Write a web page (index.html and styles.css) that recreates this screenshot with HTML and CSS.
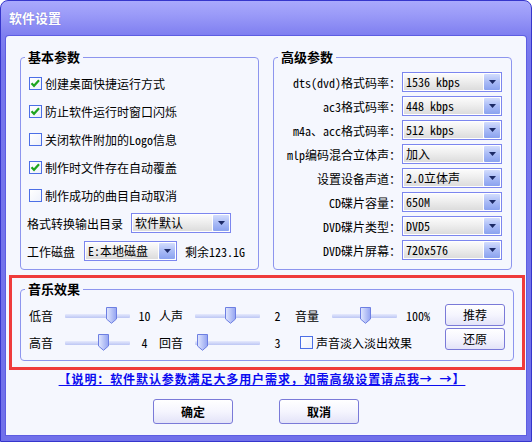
FILE: index.html
```html
<!DOCTYPE html>
<html lang="zh-CN">
<head>
<meta charset="utf-8">
<title>软件设置</title>
<link rel="stylesheet" href="styles.css">
</head>
<body>
<div class="window">
  <div class="titlebar"><span class="title">软件设置</span></div>
  <div class="client">
    <div class="top-row">
      <fieldset class="group basic">
        <legend>基本参数</legend>
        <div class="rows">
          <div class="row check"><span class="cb"><svg width="11" height="11" viewBox="0 0 11 11"><path d="M1.5 5.2 L4 7.8 L9 2.2" fill="none" stroke="#1fa51f" stroke-width="2.2"/></svg></span><span>创建桌面快捷运行方式</span></div>
          <div class="row check"><span class="cb"><svg width="11" height="11" viewBox="0 0 11 11"><path d="M1.5 5.2 L4 7.8 L9 2.2" fill="none" stroke="#1fa51f" stroke-width="2.2"/></svg></span><span>防止软件运行时窗口闪烁</span></div>
          <div class="row check"><span class="cb"></span><span>关闭软件附加的Logo信息</span></div>
          <div class="row check"><span class="cb"><svg width="11" height="11" viewBox="0 0 11 11"><path d="M1.5 5.2 L4 7.8 L9 2.2" fill="none" stroke="#1fa51f" stroke-width="2.2"/></svg></span><span>制作时文件存在自动覆盖</span></div>
          <div class="row check"><span class="cb"></span><span>制作成功的曲目自动取消</span></div>
          <div class="row field"><span class="lbl lbl-long">格式转换输出目录</span>
            <div class="select w100"><span class="sel-text">软件默认</span><span class="sel-btn"><svg width="7" height="4" viewBox="0 0 7 4"><path d="M0 0H7L3.5 4Z" fill="#1c2a66"/></svg></span></div>
          </div>
          <div class="row field"><span class="lbl lbl-short">工作磁盘</span>
            <div class="select w93"><span class="sel-text">E:本地磁盘</span><span class="sel-btn"><svg width="7" height="4" viewBox="0 0 7 4"><path d="M0 0H7L3.5 4Z" fill="#1c2a66"/></svg></span></div>
            <span class="free">剩余123.1G</span>
          </div>
        </div>
      </fieldset>
      <fieldset class="group adv">
        <legend>高级参数</legend>
        <div class="adv-grid">
          <span class="albl">dts(dvd)格式码率：</span>
          <div class="select"><span class="sel-text">1536 kbps</span><span class="sel-btn"><svg width="7" height="4" viewBox="0 0 7 4"><path d="M0 0H7L3.5 4Z" fill="#1c2a66"/></svg></span></div>
          <span class="albl">ac3格式码率：</span>
          <div class="select"><span class="sel-text">448 kbps</span><span class="sel-btn"><svg width="7" height="4" viewBox="0 0 7 4"><path d="M0 0H7L3.5 4Z" fill="#1c2a66"/></svg></span></div>
          <span class="albl">m4a、acc格式码率：</span>
          <div class="select"><span class="sel-text">512 kbps</span><span class="sel-btn"><svg width="7" height="4" viewBox="0 0 7 4"><path d="M0 0H7L3.5 4Z" fill="#1c2a66"/></svg></span></div>
          <span class="albl">mlp编码混合立体声：</span>
          <div class="select"><span class="sel-text">加入</span><span class="sel-btn"><svg width="7" height="4" viewBox="0 0 7 4"><path d="M0 0H7L3.5 4Z" fill="#1c2a66"/></svg></span></div>
          <span class="albl">设置设备声道：</span>
          <div class="select"><span class="sel-text">2.0立体声</span><span class="sel-btn"><svg width="7" height="4" viewBox="0 0 7 4"><path d="M0 0H7L3.5 4Z" fill="#1c2a66"/></svg></span></div>
          <span class="albl">CD碟片容量：</span>
          <div class="select"><span class="sel-text">650M</span><span class="sel-btn"><svg width="7" height="4" viewBox="0 0 7 4"><path d="M0 0H7L3.5 4Z" fill="#1c2a66"/></svg></span></div>
          <span class="albl">DVD碟片类型：</span>
          <div class="select"><span class="sel-text">DVD5</span><span class="sel-btn"><svg width="7" height="4" viewBox="0 0 7 4"><path d="M0 0H7L3.5 4Z" fill="#1c2a66"/></svg></span></div>
          <span class="albl">DVD碟片屏幕：</span>
          <div class="select"><span class="sel-text">720x576</span><span class="sel-btn"><svg width="7" height="4" viewBox="0 0 7 4"><path d="M0 0H7L3.5 4Z" fill="#1c2a66"/></svg></span></div>
        </div>
      </fieldset>
    </div>

    <div class="highlight">
      <fieldset class="group music">
        <legend>音乐效果</legend>
        <div class="music-body">
          <div class="sliders">
            <span class="slbl">低音</span>
            <div class="slider"><div class="track"></div><svg class="thumb" style="left:41px" width="11" height="17" viewBox="0 0 11 17"><defs><linearGradient id="tg1" x1="0" y1="0" x2="1" y2="0"><stop offset="0" stop-color="#e2e8fe"/><stop offset="1" stop-color="#93a3f1"/></linearGradient></defs><path d="M0.5 0.5H10.5V12L5.5 16.3L0.5 12Z" fill="url(#tg1)" stroke="#6d7fe2"/></svg></div>
            <span class="sval">10</span>
            <span class="slbl">人声</span>
            <div class="slider"><div class="track"></div><svg class="thumb" style="left:30px" width="11" height="17" viewBox="0 0 11 17"><path d="M0.5 0.5H10.5V12L5.5 16.3L0.5 12Z" fill="url(#tg1)" stroke="#6d7fe2"/></svg></div>
            <span class="sval">2</span>
            <span class="slbl">音量</span>
            <div class="slider"><div class="track"></div><svg class="thumb" style="left:28px" width="11" height="17" viewBox="0 0 11 17"><path d="M0.5 0.5H10.5V12L5.5 16.3L0.5 12Z" fill="url(#tg1)" stroke="#6d7fe2"/></svg></div>
            <span class="sval pct">100%</span>

            <span class="slbl">高音</span>
            <div class="slider"><div class="track"></div><svg class="thumb" style="left:33px" width="11" height="17" viewBox="0 0 11 17"><path d="M0.5 0.5H10.5V12L5.5 16.3L0.5 12Z" fill="url(#tg1)" stroke="#6d7fe2"/></svg></div>
            <span class="sval">4</span>
            <span class="slbl">回音</span>
            <div class="slider"><div class="track"></div><svg class="thumb" style="left:2px" width="11" height="17" viewBox="0 0 11 17"><path d="M0.5 0.5H10.5V12L5.5 16.3L0.5 12Z" fill="url(#tg1)" stroke="#6d7fe2"/></svg></div>
            <span class="sval">3</span>
            <div class="fade check"><span class="cb"></span><span>声音淡入淡出效果</span></div>
          </div>
          <div class="btn-col">
            <button class="btn small">推荐</button>
            <button class="btn small">还原</button>
          </div>
        </div>
      </fieldset>
    </div>

    <div class="note"><a class="link">【说明：软件默认参数满足大多用户需求，如需高级设置请点我→ →】</a></div>

    <div class="actions">
      <button class="btn big">确定</button>
      <button class="btn big">取消</button>
    </div>
  </div>
</div>
</body>
</html>
```

FILE: styles.css
```css
* { box-sizing: border-box; }
html, body { margin: 0; padding: 0; background: #ffffff; }
body {
  font-family: "Noto Sans Mono CJK SC", "Noto Sans CJK SC", "DejaVu Sans", sans-serif;
  font-size: 12px;
  color: #000;
}

.window {
  width: 532px;
  height: 442px;
  border: 1px solid #3636cc;
  border-radius: 8px 8px 0 0;
  background: linear-gradient(to bottom, #a9a9fd 0px, #9a9af8 14px, #7f7ff0 34px, #7676ec 60px, #7070ea 100%);
  display: flex;
  flex-direction: column;
  overflow: hidden;
}

.titlebar {
  height: 35px;
  flex: none;
  padding-left: 8px;
  display: flex;
  align-items: center;
}
.title {
  color: #fff;
  font-weight: bold;
  font-size: 13px;
  line-height: 16px;
  margin-top: -1px;
  text-shadow: 0 0 1px rgba(60, 60, 160, 0.5);
}

.client {
  flex: 1;
  margin: 0 5px 6px 5px;
  background: #f5f7fe;
  border-radius: 3px 3px 0 0;
  box-shadow: 0 0 0 1px #5d5de2;
  display: flex;
  flex-direction: column;
}

.top-row {
  display: flex;
  gap: 14px;
  padding: 13px 14px 0 14px;
}

fieldset.group {
  margin: 0;
  min-width: 0;
  border: 1px solid #8d95ee;
  border-radius: 4px;
  padding: 0 8px 4px 8px;
}
fieldset.group legend {
  font-size: 13px;
  font-weight: bold;
  line-height: 16px;
  padding: 0 3px;
  margin-left: -4px;
}

.basic, .adv { width: 239px; }

.rows { padding-top: 4px; }
.row {
  height: 28px;
  display: flex;
  align-items: center;
}
.check { display: flex; align-items: center; gap: 3px; }

.cb {
  width: 13px;
  height: 13px;
  flex: none;
  border: 1px solid #4c6fe6;
  background: linear-gradient(to bottom right, #ffffff, #eef1fb);
  display: flex;
  align-items: center;
  justify-content: center;
}
.cb svg { display: block; }

.lbl { margin-left: -2px; flex: none; }
.lbl-long { width: 104px; }
.lbl-short { width: 57px; }
.free { margin-left: 8px; }

.select {
  height: 20px;
  border: 1px solid #7c86ef;
  background: #fff;
  display: flex;
  padding: 1px;
  gap: 1px;
}
.w100 { width: 100px; }
.w93 { width: 93px; }
.sel-text {
  flex: 1;
  min-width: 0;
  padding-left: 2px;
  line-height: 16px;
  white-space: nowrap;
  overflow: hidden;
  background: linear-gradient(to bottom, #fbfbfb 0%, #eeeeee 45%, #dcdcdc 100%);
}
.sel-btn {
  width: 16px;
  flex: none;
  border-radius: 1px;
  background: linear-gradient(to bottom, #d3ddfd 0%, #a9bbf6 50%, #8aa2ef 100%);
  display: flex;
  align-items: center;
  justify-content: center;
}

.adv-grid {
  display: grid;
  grid-template-columns: 1fr 100px;
  grid-auto-rows: 24px;
  column-gap: 1px;
  align-items: center;
  padding-top: 5px;
  margin-right: 1px;
}
.albl { text-align: right; white-space: nowrap; }

.highlight {
  margin: 5px 1px 0 3px;
  border: 3px solid #ef3b3b;
  padding: 3px 8px 6px 8px;
}
.music { width: 100%; padding: 0 9px 4px 8px; }

.music-body { display: flex; }
.sliders {
  display: grid;
  grid-template-columns: 36px 65px 29px 36px 65px 35px 37px 65px 46px;
  grid-template-rows: 27px 27px;
  align-items: center;
  padding-top: 5px;
}
.slider {
  position: relative;
  height: 17px;
  display: flex;
  align-items: center;
}
.track {
  width: 100%;
  height: 4px;
  border-radius: 1px;
  background: linear-gradient(to bottom, #e6eafd, #bcc6f4);
}
.thumb { position: absolute; top: 0; display: block; }
.sval { text-align: center; }
.pct { text-align: left; padding-left: 9px; }
.fade { grid-column: 7 / 10; padding-left: 5px; }

.btn-col {
  margin-left: auto;
  padding-top: 7px;
  display: flex;
  flex-direction: column;
  gap: 2px;
}

.btn {
  font-family: inherit;
  font-size: 12px;
  color: #000;
  border: 1px solid #7a7ad8;
  border-radius: 3px;
  background: linear-gradient(to bottom, #ffffff 0%, #f5f5fe 50%, #e3e3f8 100%);
  padding: 0;
  line-height: 16px;
}
.small { width: 60px; height: 22px; }
.big { width: 80px; height: 25px; font-weight: bold; }

.note {
  margin-top: 1px;
  text-align: center;
  padding-right: 8px;
  line-height: 16px;
}
.link {
  color: #0b0bf0;
  font-weight: bold;
  text-decoration: underline;
  letter-spacing: 0.9px;
}

.actions {
  margin-top: 12px;
  display: flex;
  gap: 46px;
  padding-left: 147px;
}
```
